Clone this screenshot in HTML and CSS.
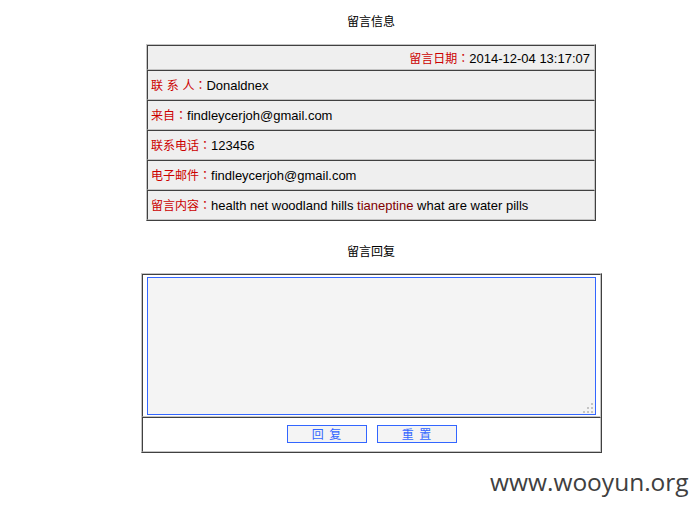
FILE: index.html
```html
<!DOCTYPE html>
<html>
<head>
<meta charset="utf-8">
<link rel="stylesheet" href="styles.css">
</head>
<body>
<div class="wrap">
  <div class="title t1">留言信息</div>
  <table class="info">
    <tr class="first"><td class="right"><span class="lbl">留言日期<span class="colon">：</span></span>2014-12-04 13:17:07</td></tr>
    <tr><td><span class="lbl">联 系 人<span class="colon">：</span></span>Donaldnex</td></tr>
    <tr><td><span class="lbl">来自<span class="colon">：</span></span>findleycerjoh@gmail.com</td></tr>
    <tr><td><span class="lbl">联系电话<span class="colon">：</span></span>123456</td></tr>
    <tr><td><span class="lbl">电子邮件<span class="colon">：</span></span>findleycerjoh@gmail.com</td></tr>
    <tr><td><span class="lbl">留言内容<span class="colon">：</span></span>health net woodland hills <a class="lnk">tianeptine</a> what are water pills</td></tr>
  </table>
  <div class="title t2">留言回复</div>
  <table class="reply">
    <tr><td class="tacell"><div class="tabox"><textarea class="ta"></textarea><span class="grip"></span></div></td></tr>
    <tr><td class="btncell"><div class="btns"><button class="btn">回 复</button><button class="btn">重 置</button></div></td></tr>
  </table>
</div>
<div class="mark">www.wooyun.org</div>
</body>
</html>
```
FILE: styles.css
```css
html, body {
  margin: 0;
  padding: 0;
  background: #fff;
}
body {
  font-family: "Liberation Sans", "Noto Sans CJK SC", sans-serif;
  font-size: 13px;
  color: #000;
  position: relative;
  height: 512px;
  overflow: hidden;
}
.wrap {
  margin-left: 141px;
  width: 460px;
}
.title {
  text-align: center;
  font-family: "Noto Sans CJK SC", sans-serif;
  font-size: 12px;
  line-height: 16px;
  box-sizing: border-box;
}
.t1 {
  padding-top: 13px;
  height: 44px;
}
.t2 {
  padding-top: 22px;
  height: 52px;
}
table {
  border-collapse: separate;
  border-spacing: 0;
}
.info {
  width: 450px;
  margin: 0 auto;
  border-top: 1px solid #c4c4c4;
  border-left: 1px solid #c4c4c4;
  border-bottom: 1px solid #404040;
  border-right: 1px solid #404040;
}
.info td {
  background: #efefef;
  border-top: 1px solid #404040;
  border-left: 1px solid #404040;
  border-bottom: 1px solid #c4c4c4;
  border-right: 1px solid #c4c4c4;
  height: 30px;
  padding: 1px 4px 0 3px;
  box-sizing: border-box;
  line-height: 16px;
  vertical-align: middle;
}
.info tr.first td {
  height: 25px;
}
.info td.right {
  text-align: right;
}
.lbl {
  color: #cc0000;
  font-family: "Noto Sans CJK SC", sans-serif;
  font-size: 12px;
  word-spacing: 1px;
}
.colon {
  font-family: "Noto Sans CJK TC", sans-serif;
}
.lnk {
  color: #800000;
  text-decoration: none;
}
.reply {
  width: 460px;
  border-top: 1px solid #c4c4c4;
  border-left: 1px solid #c4c4c4;
  border-bottom: 1px solid #404040;
  border-right: 1px solid #404040;
}
.reply td {
  border-top: 1px solid #404040;
  border-left: 1px solid #404040;
  border-bottom: 1px solid #c4c4c4;
  border-right: 1px solid #c4c4c4;
  padding: 0;
}
.reply td.tacell {
  padding: 2px 4px 1px 4px;
  height: 143px;
  box-sizing: border-box;
}
.tabox {
  position: relative;
  width: 449px;
  height: 138px;
}
.ta {
  display: block;
  width: 449px;
  height: 138px;
  box-sizing: border-box;
  margin: 0;
  border: 1px solid #3366ff;
  background: #f4f4f4;
  outline: none;
  padding: 2px;
  resize: none;
}
.grip {
  position: absolute;
  right: 3px;
  bottom: 2px;
  width: 2px;
  height: 2px;
  background: #c4c4c4;
  box-shadow: -4px 0 0 #c4c4c4, -8px 0 0 #c4c4c4, 0 -4px 0 #c4c4c4, -4px -4px 0 #c4c4c4, 0 -8px 0 #c4c4c4;
}
.reply td.btncell {
  height: 35px;
  box-sizing: border-box;
  vertical-align: top;
}
.btns {
  display: flex;
  justify-content: center;
  gap: 10px;
  padding-top: 7px;
}
.btn {
  width: 80px;
  height: 18px;
  box-sizing: border-box;
  margin: 0;
  padding: 0;
  border: 1px solid #3366ff;
  background: #f4f4f4;
  color: #3366ff;
  font-family: "Noto Sans CJK SC", sans-serif;
  font-size: 12px;
  line-height: 16px;
  word-spacing: 3px;
}
.mark {
  position: absolute;
  left: 490px;
  top: 467px;
  font-family: "Open Sans", sans-serif;
  font-size: 24.5px;
  line-height: 30px;
  color: #404040;
}
```
